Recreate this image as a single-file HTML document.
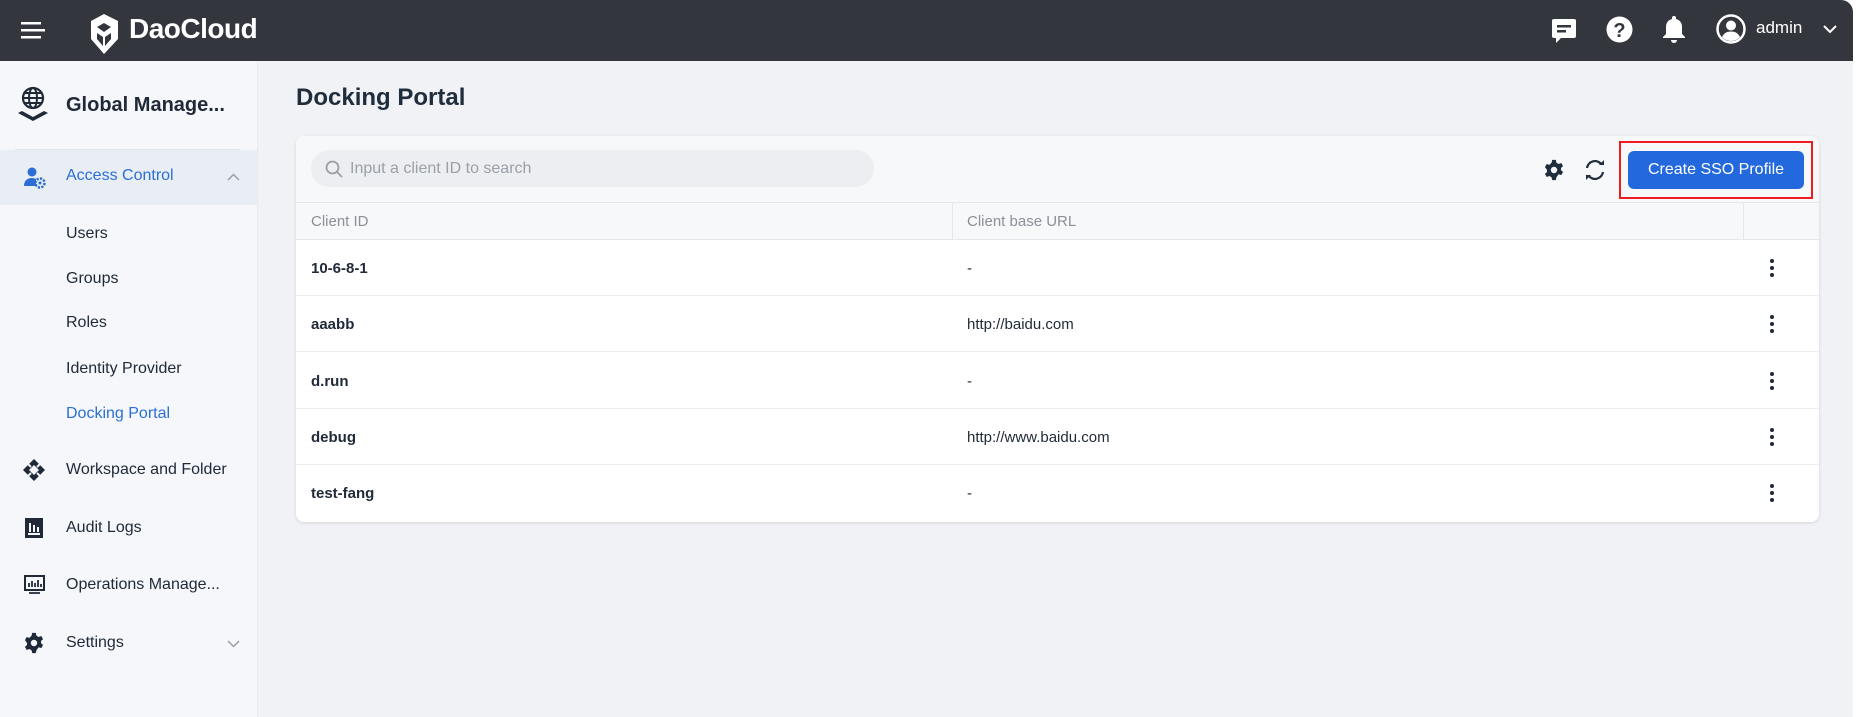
<!DOCTYPE html>
<html><head><meta charset="utf-8"><style>
*{box-sizing:border-box;margin:0;padding:0}
body{width:1857px;height:717px;overflow:hidden;background:#fff;font-family:"Liberation Sans",sans-serif;position:relative}
.hdr{position:absolute;left:0;top:0;width:1853px;height:61px;background:#33363c;border-top-right-radius:12px}
.side{position:absolute;left:0;top:61px;width:258px;height:656px;background:#f5f7fa;border-right:1px solid #e8eaef}
.main{position:absolute;left:258px;top:61px;width:1595px;height:656px;background:#f1f2f5}
.abs{position:absolute}
.nav{position:absolute;left:66px;font-size:16px;color:#1f2937}
.ico{position:absolute;left:23px}
.card{position:absolute;left:296px;top:136px;width:1523px;height:386px;background:#fff;border-radius:8px;box-shadow:0 1px 3px rgba(0,0,0,.12);overflow:hidden}
.tb{position:absolute;left:0;top:0;width:100%;height:67px;background:#f7f8fa;border-bottom:1px solid #e5e7eb}
.th{position:absolute;left:0;top:67px;width:100%;height:37px;background:#f7f8fa;border-bottom:1px solid #e5e7eb;font-size:15px;color:#8a8f98}
.row{position:absolute;left:0;width:100%;height:56px;border-bottom:1px solid #eceef2;font-size:15px;color:#1f2937}
.row .c1{position:absolute;left:15px;top:20px;font-weight:bold}
.row .c2{position:absolute;left:671px;top:20px}
.row .k{position:absolute;left:1474px;top:19px;width:4px}
.row .k i{display:block;width:4px;height:4px;border-radius:2px;background:#1f2937;margin-bottom:3px}
</style></head><body>
<div class="hdr">
 <svg class="abs" style="left:21px;top:20px" width="24" height="20"><rect x="0" y="2" width="20" height="2.5" fill="#fff"/><rect x="0" y="9" width="24" height="2.5" fill="#fff"/><rect x="0" y="16" width="20" height="2.5" fill="#fff"/></svg>
 <svg class="abs" style="left:88px;top:13px" width="33" height="42" viewBox="0 0 33 42"><path d="M16 1 L30 8 L30 26 L16 41 L3 26 L3 8 Z" fill="#fff"/><path d="M16 10 L23 14 L16 19 L9 14Z" fill="#33363c"/><path d="M9 20 L15 24 L15 33 L9 26Z M23 20 L17 24 L17 33 L23 26Z" fill="#33363c"/></svg>
 <div class="abs" style="left:129px;top:13px;font-size:28px;font-weight:bold;color:#fff;letter-spacing:-0.5px">DaoCloud</div>
 <svg class="abs" style="left:1551px;top:17px" width="26" height="28" viewBox="0 0 26 28"><path d="M3 2h20a2 2 0 0 1 2 2v15a2 2 0 0 1-2 2H10l-5 5v-5H3a2 2 0 0 1-2-2V4a2 2 0 0 1 2-2z" fill="#fff"/><rect x="6" y="8" width="14" height="2.5" fill="#33363c"/><rect x="6" y="13" width="9" height="2.5" fill="#33363c"/></svg>
 <svg class="abs" style="left:1606px;top:16px" width="27" height="27" viewBox="0 0 27 27"><circle cx="13.5" cy="13.5" r="13" fill="#fff"/><text x="13.5" y="21" font-size="20" font-weight="bold" text-anchor="middle" fill="#33363c" font-family="Liberation Sans">?</text></svg>
 <svg class="abs" style="left:1662px;top:15px" width="24" height="29" viewBox="0 0 24 29"><path d="M12 1a2 2 0 0 1 2 2v1c4 1 6 4 6 8v7l3 3v1H1v-1l3-3v-7c0-4 2-7 6-8V3a2 2 0 0 1 2-2z" fill="#fff"/><path d="M9 25h6a3 3 0 0 1-6 0z" fill="#fff"/></svg>
 <svg class="abs" style="left:1716px;top:14px" width="30" height="30" viewBox="0 0 30 30"><circle cx="15" cy="15" r="13.5" fill="none" stroke="#fff" stroke-width="2.5"/><circle cx="15" cy="11.5" r="5" fill="#fff"/><path d="M6 23c2-4 5-5.5 9-5.5s7 1.5 9 5.5c-2.5 2.5-5.5 4-9 4s-6.5-1.5-9-4z" fill="#fff"/></svg>
 <div class="abs" style="left:1756px;top:18px;font-size:17px;color:#fff">admin</div>
 <svg class="abs" style="left:1823px;top:25px" width="14" height="9"><path d="M1 1l6 6 6-6" stroke="#fff" stroke-width="2" fill="none"/></svg>
</div>
<div class="side">
 <svg class="ico" style="left:17px;top:24px" width="32" height="36" viewBox="0 0 32 36"><circle cx="16" cy="13" r="10" fill="none" stroke="#1f2937" stroke-width="2.2"/><ellipse cx="16" cy="13" rx="4" ry="10" fill="none" stroke="#1f2937" stroke-width="2"/><path d="M6 13h20M8 8h16M8 18h16" stroke="#1f2937" stroke-width="2"/><path d="M1 28l15 8 15-8-4-2-11 6-11-6z" fill="#1f2937"/></svg>
 <div class="abs" style="left:66px;top:33px;font-size:20px;font-weight:bold;color:#1f2937">Global Manage...</div>
 <div class="abs" style="left:15px;top:88px;width:225px;height:1px;background:#e3e6eb"></div>
 <div class="abs" style="left:0;top:89px;width:257px;height:55px;background:#e9edf4"></div>
 <svg class="ico" style="top:105px" width="24" height="24" viewBox="0 0 24 24"><circle cx="9" cy="6" r="4.5" fill="#2b6fd6"/><path d="M1 20c0-5 3-8 8-8 2 0 3 .5 4 1v7z" fill="#2b6fd6"/><circle cx="17" cy="17" r="4.5" fill="none" stroke="#2b6fd6" stroke-width="2.5" stroke-dasharray="2.2 1.3"/><circle cx="17" cy="17" r="1.5" fill="#2b6fd6"/></svg>
 <div class="nav" style="top:106px;color:#2b6fd6">Access Control</div>
 <svg class="abs" style="left:227px;top:112px" width="13" height="8"><path d="M1 7l5.5-5.5L12 7" stroke="#9aa0a8" stroke-width="1.5" fill="none"/></svg>
 <div class="nav" style="top:164px">Users</div>
 <div class="nav" style="top:209px">Groups</div>
 <div class="nav" style="top:253px">Roles</div>
 <div class="nav" style="top:299px">Identity Provider</div>
 <div class="nav" style="top:344px;color:#2b6fd6">Docking Portal</div>
 <svg class="ico" style="top:398px" width="22" height="22" viewBox="0 0 22 22"><path d="M11 0l11 11-11 11L0 11z" fill="#1f2937"/><path d="M11 6l5 5-5 5-5-5z" fill="#f5f7fa"/><path d="M5 5l3 3M14 14l3 3M17 5l-3 3M8 14l-3 3" stroke="#f5f7fa" stroke-width="2"/></svg>
 <div class="nav" style="top:400px">Workspace and Folder</div>
 <svg class="ico" style="left:25px;top:457px" width="18" height="20" viewBox="0 0 18 20"><rect width="18" height="20" fill="#1f2937"/><path d="M5 5v9M9 7v7M13 9v5M3 16h12" stroke="#f5f7fa" stroke-width="2"/></svg>
 <div class="nav" style="top:458px">Audit Logs</div>
 <svg class="ico" style="top:514px;left:24px" width="21" height="20" viewBox="0 0 21 20"><rect x="1" y="1" width="19" height="14" fill="none" stroke="#1f2937" stroke-width="2"/><path d="M5 12V8M8 12V6M11 12V8M14 12V5M17 12V9M5 18h11" stroke="#1f2937" stroke-width="1.8"/></svg>
 <div class="nav" style="top:515px">Operations Manage...</div>
 <svg class="ico" style="left:23px;top:571px" width="22" height="22" viewBox="0 0 24 24"><path fill="#1f2937" d="M10 1h4l.6 3 2.4 1.4 2.9-1 2 3.4-2.3 2a8 8 0 0 1 0 2.4l2.3 2-2 3.4-2.9-1L14.6 20 14 23h-4l-.6-3-2.4-1.4-2.9 1-2-3.4 2.3-2a8 8 0 0 1 0-2.4L2.1 8.8l2-3.4 2.9 1L9.4 4z"/><circle cx="12" cy="12" r="3.5" fill="#f5f7fa"/></svg>
 <div class="nav" style="top:573px">Settings</div>
 <svg class="abs" style="left:227px;top:579px" width="13" height="8"><path d="M1 1l5.5 5.5L12 1" stroke="#9aa0a8" stroke-width="1.5" fill="none"/></svg>
</div>
<div class="main"></div>
<div class="abs" style="left:1853px;top:0;width:4px;height:717px;background:#fff"></div>
<div class="abs" style="left:296px;top:84px;font-size:24px;font-weight:bold;color:#1f2d3d">Docking Portal</div>
<div class="card">
 <div class="tb">
  <div class="abs" style="left:15px;top:14px;width:563px;height:37px;border-radius:19px;background:#eceef2"></div>
  <svg class="abs" style="left:29px;top:24px" width="18" height="18"><circle cx="7.5" cy="7.5" r="6" fill="none" stroke="#9aa0a8" stroke-width="1.8"/><path d="M12 12l5 5" stroke="#9aa0a8" stroke-width="1.8"/></svg>
  <div class="abs" style="left:54px;top:24px;font-size:16px;color:#9aa0a8">Input a client ID to search</div>
  <svg class="abs" style="left:1247px;top:23px" width="22" height="22" viewBox="0 0 24 24"><path fill="#1f2d3d" d="M10 1h4l.6 3 2.4 1.4 2.9-1 2 3.4-2.3 2a8 8 0 0 1 0 2.4l2.3 2-2 3.4-2.9-1L14.6 20 14 23h-4l-.6-3-2.4-1.4-2.9 1-2-3.4 2.3-2a8 8 0 0 1 0-2.4L2.1 8.8l2-3.4 2.9 1L9.4 4z"/><circle cx="12" cy="12" r="3.5" fill="#f7f8fa"/></svg>
  <svg class="abs" style="left:1287px;top:23px" width="24" height="22" viewBox="0 0 24 22"><path d="M4 9a8 8 0 0 1 14.5-3.5M20 13a8 8 0 0 1-14.5 3.5" fill="none" stroke="#1f2d3d" stroke-width="2.2"/><path d="M16 6h5V1zM8 16H3v5z" fill="#1f2d3d"/></svg>
  <div class="abs" style="left:1323px;top:5px;width:194px;height:58px;border:2.5px solid #ee1c1c"></div>
  <div class="abs" style="left:1332px;top:15px;width:176px;height:38px;border-radius:6px;background:#2369dd;color:#fff;font-size:16px;text-align:center;line-height:38px">Create SSO Profile</div>
 </div>
 <div class="th">
  <div class="abs" style="left:15px;top:10px">Client ID</div>
  <div class="abs" style="left:656px;top:0;width:1px;height:37px;background:#e5e7eb"></div>
  <div class="abs" style="left:671px;top:10px">Client base URL</div>
  <div class="abs" style="left:1447px;top:0;width:1px;height:37px;background:#e5e7eb"></div>
 </div>
 <div class="row" style="top:104px"><span class="c1">10-6-8-1</span><span class="c2">-</span><span class="k"><i></i><i></i><i></i></span></div>
 <div class="row" style="top:160px"><span class="c1">aaabb</span><span class="c2">http://baidu.com</span><span class="k"><i></i><i></i><i></i></span></div>
 <div class="row" style="top:217px"><span class="c1">d.run</span><span class="c2">-</span><span class="k"><i></i><i></i><i></i></span></div>
 <div class="row" style="top:273px"><span class="c1">debug</span><span class="c2">http://www.baidu.com</span><span class="k"><i></i><i></i><i></i></span></div>
 <div class="row" style="top:329px;border-bottom:none"><span class="c1">test-fang</span><span class="c2">-</span><span class="k"><i></i><i></i><i></i></span></div>
</div>
</body></html>
